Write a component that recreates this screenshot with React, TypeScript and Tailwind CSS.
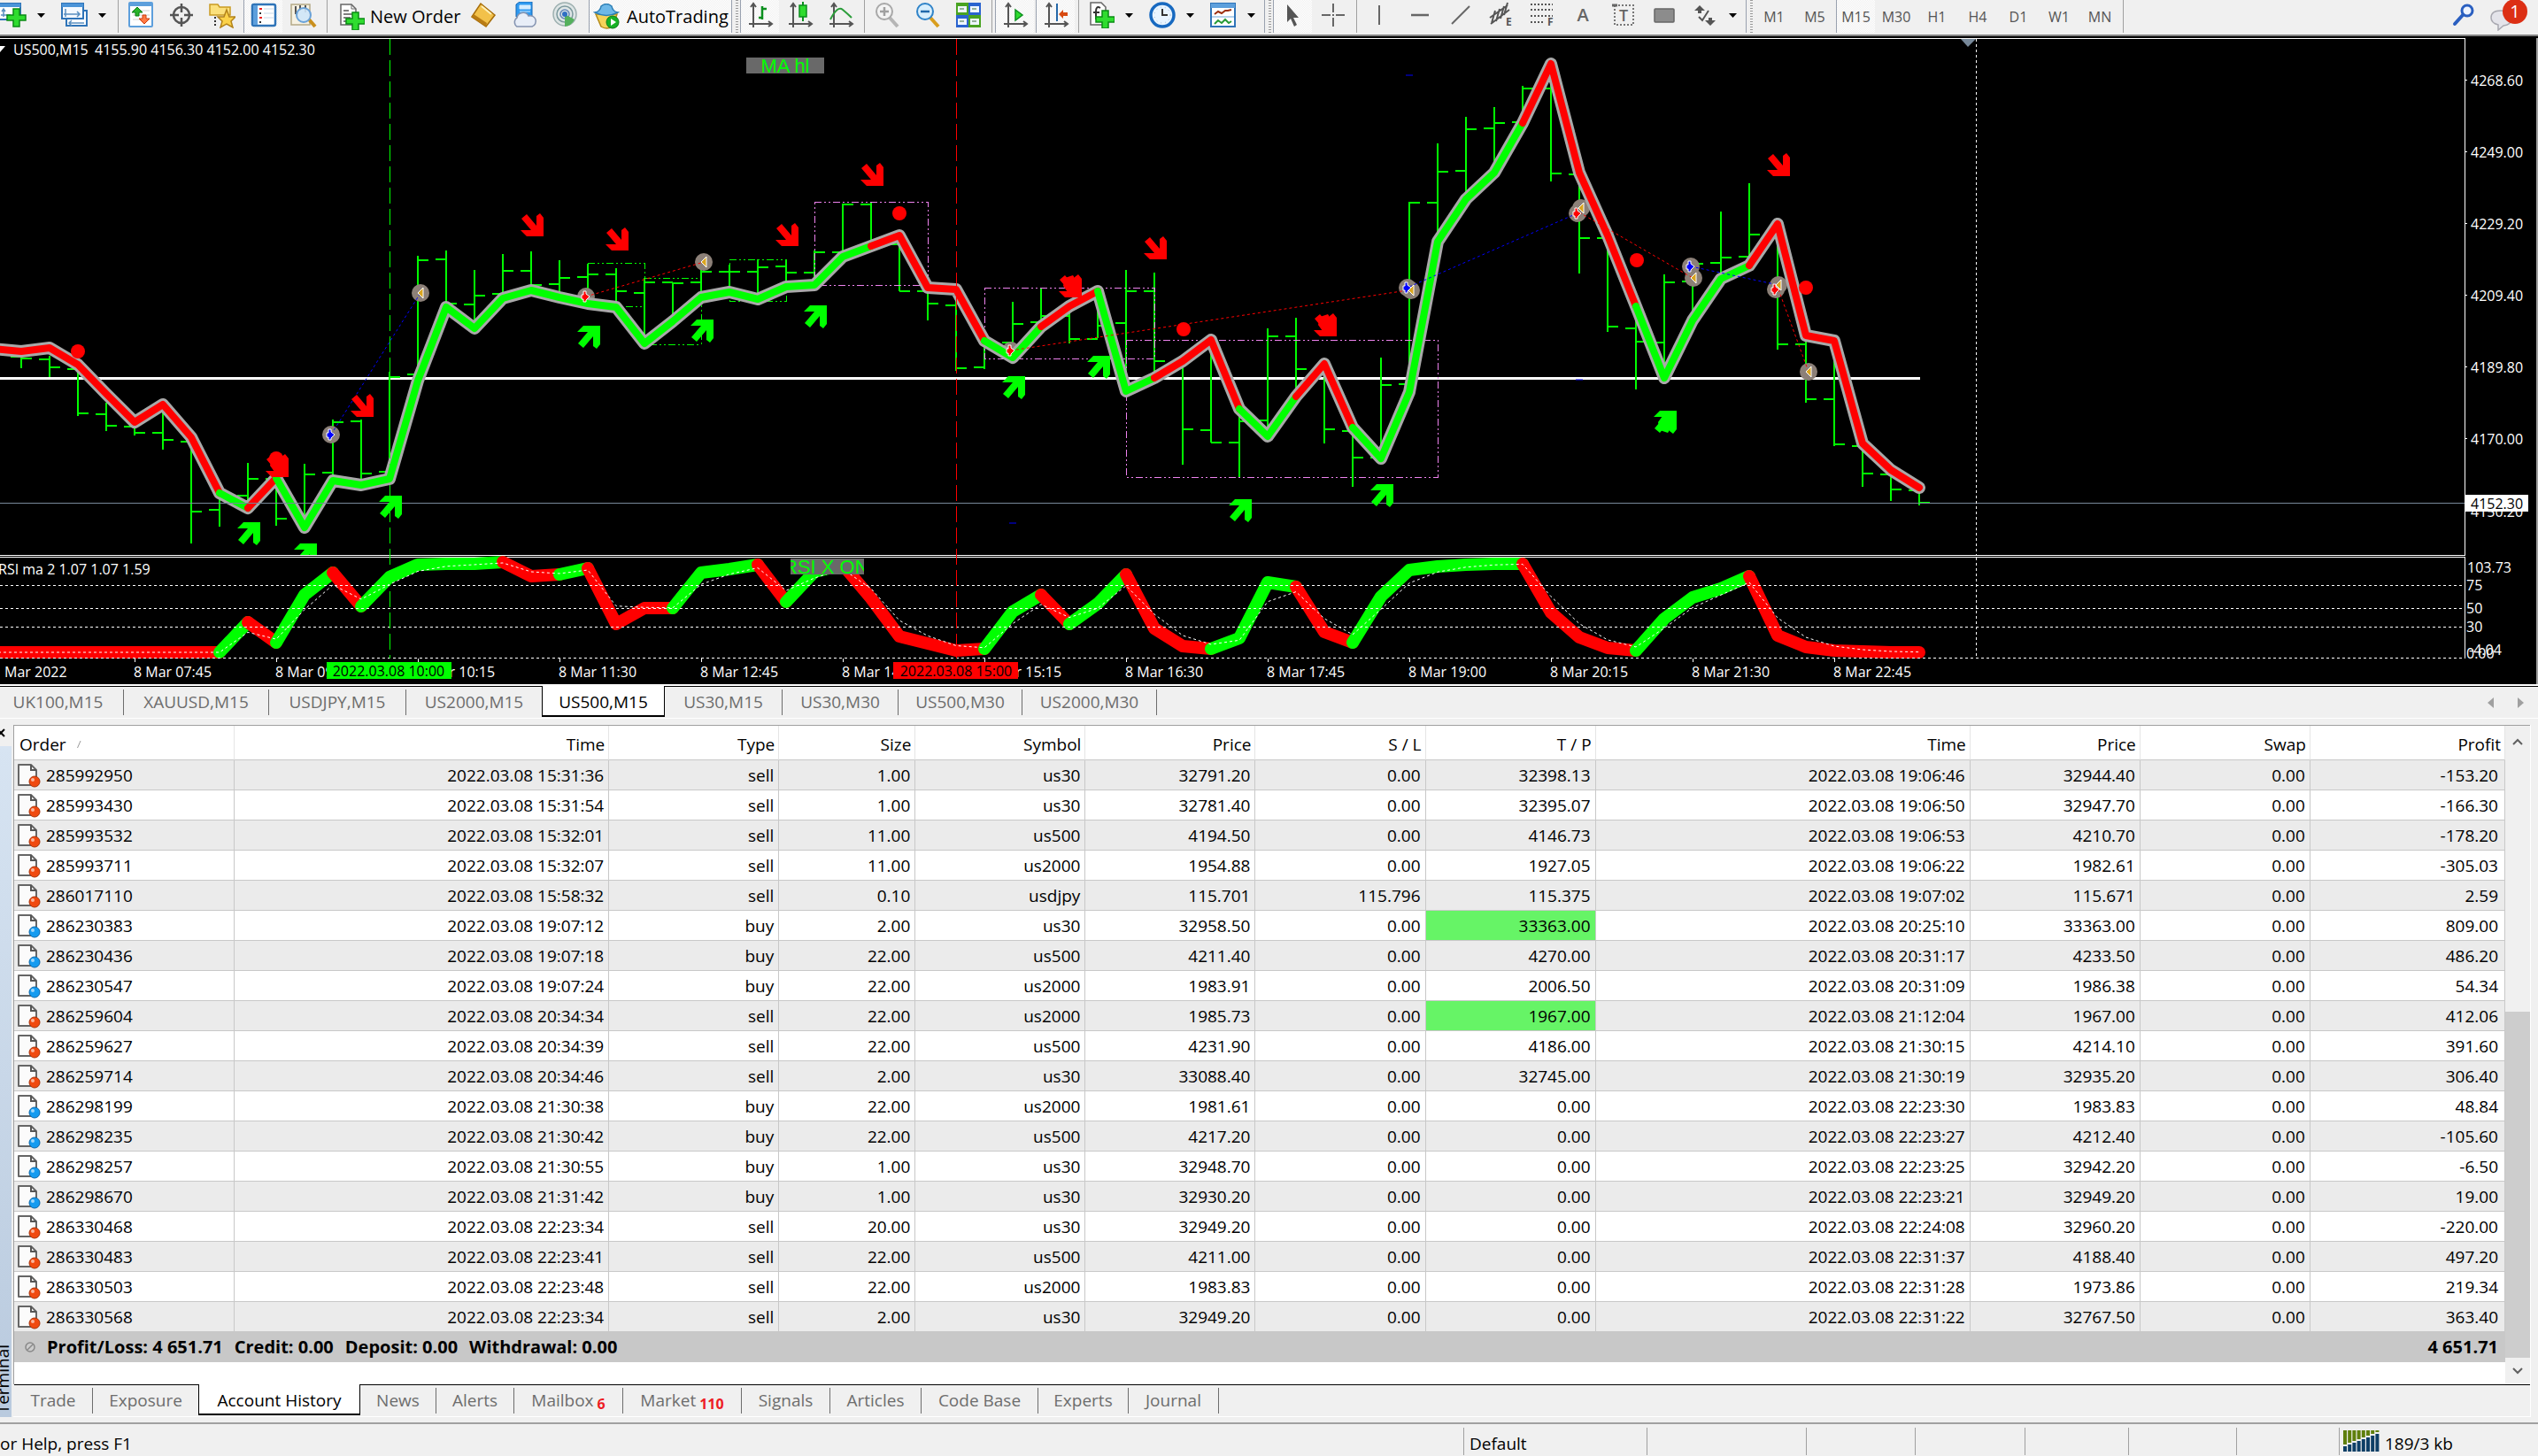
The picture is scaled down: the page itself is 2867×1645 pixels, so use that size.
import type { ReactNode } from "react";
import clsx from "clsx";

type Color = "r" | "g";
type Bar = [high: number, low: number, open: number, close: number];

const RED = "#ff0000";
const GREEN = "#00ff00";
const FONT = "'Open Sans', sans-serif";
const LABEL_FONT = "'Liberation Sans', sans-serif";

const BAR_START = 24;
const BAR_STEP = 32;
const barX = (i: number) => BAR_START + BAR_STEP * i;

const bars: Bar[] = [
    [400, 416, 403, 405], [402, 426, 406, 415], [400, 470, 417, 467], [455, 487, 468, 481],
    [480, 492, 482, 489], [462, 508, 489, 497], [500, 614, 499, 578], [556, 595, 576, 558],
    [523, 573, 560, 541], [540, 594, 541, 586], [524, 590, 586, 536], [474, 540, 534, 477],
    [474, 543, 476, 535], [420, 540, 533, 426], [289, 430, 423, 294], [283, 346, 293, 343],
    [305, 371, 344, 334], [287, 337, 332, 306], [284, 327, 306, 322], [294, 334, 321, 314],
    [298, 343, 313, 310], [303, 347, 310, 329], [314, 389, 331, 319], [319, 363, 319, 320],
    [288, 336, 319, 307], [299, 330, 307, 307], [293, 338, 307, 302], [293, 323, 301, 308],
    [283, 322, 308, 285], [230, 290, 285, 231], [228, 278, 231, 277], [266, 329, 276, 329],
    [325, 362, 329, 343], [327, 419, 345, 416], [385, 417, 415, 386], [341, 404, 387, 366],
    [326, 369, 364, 357], [346, 388, 357, 383], [329, 382, 383, 368], [305, 442, 365, 329],
    [308, 427, 329, 408], [408, 525, 408, 485], [384, 500, 486, 500], [462, 539, 500, 476],
    [371, 493, 475, 380], [359, 448, 380, 417], [411, 501, 417, 485], [483, 550, 487, 517],
    [404, 518, 517, 435], [228, 443, 434, 229], [162, 273, 229, 194], [132, 223, 193, 146],
    [121, 195, 145, 139], [97, 139, 138, 100], [75, 205, 100, 196], [195, 309, 197, 269],
    [266, 375, 269, 369], [346, 440, 371, 386], [310, 427, 387, 319], [292, 365, 318, 298],
    [239, 315, 297, 291], [207, 300, 290, 265], [253, 395, 265, 389], [379, 455, 389, 451],
    [385, 504, 451, 502], [501, 550, 504, 535], [531, 566, 536, 553], [551, 571, 554, 568],
];

const average = [
    397, 393, 412, 445, 477, 457, 494, 557, 574, 540, 596, 543, 548, 541, 430, 347, 371, 337, 328, 336,
    343, 347, 388, 363, 336, 330, 338, 324, 322, 290, 278, 266, 325, 327, 385, 404, 369, 346, 329, 442,
    427, 408, 384, 462, 493, 448, 411, 483, 518, 443, 273, 225, 195, 139, 72, 195, 266, 346, 427, 362,
    315, 300, 253, 379, 385, 501, 531, 551,
];

const rsi = [
    737, 737, 737, 737, 737, 737, 737, 737, 703, 726, 672, 647, 685, 652, 638, 637, 637, 635, 651, 649,
    642, 705, 687, 687, 647, 643, 638, 680, 646, 638, 676, 719, 727, 735, 733, 691, 672, 705, 682, 649,
    710, 730, 733, 721, 658, 663, 714, 726, 674, 644, 640, 638, 637, 637, 692, 720, 732, 735, 699, 675,
    665, 651, 718, 731, 735, 736, 737, 737,
];

// [x of the last point, colour]
const averageRuns: [number, Color][] = [
    [248, "r"], [280, "g"], [312, "r"], [984, "g"], [1112, "r"], [1176, "g"], [1240, "r"], [1304, "g"],
    [1400, "r"], [1464, "g"], [1528, "r"], [1720, "g"], [1848, "r"], [1976, "g"], [2168, "r"],
];
const rsiRuns: [number, Color][] = [
    [248, "r"], [280, "g"], [312, "r"], [376, "g"], [408, "r"], [568, "g"], [632, "r"], [664, "g"],
    [760, "r"], [856, "g"], [888, "r"], [952, "g"], [1112, "r"], [1176, "g"], [1208, "r"], [1272, "g"],
    [1368, "r"], [1464, "g"], [1528, "r"], [1720, "g"], [1848, "r"], [1976, "g"], [2168, "r"],
];

const toPoints = (values: number[], startY: number) =>
    [`-8,${startY}`, ...values.map((y, i) => `${barX(i)},${y}`)];

const splitRuns = (points: string[], runs: [number, Color][]) => {
    let from = 0;
    return runs.map(([x, color]) => {
        const to = (x - BAR_START) / BAR_STEP + 1;
        const part = points.slice(from, to + 1).join(" ");
        from = to;
        return { part, color };
    });
};

const averagePoints = toPoints(average, 394);
const rsiPoints = toPoints(rsi, 737);
const signal = rsi.reduce<number[]>((acc, v) => {
    const prev = acc.length ? acc[acc.length - 1] : v;
    return [...acc, prev + ((v - prev) * 2) / 3];
}, []);

const sellArrows = [
    [601, 254], [697, 270], [889, 265], [985, 197], [1305, 280], [1209, 323], [1497, 367], [2009, 186],
    [409, 458], [313, 526],
];
const buyArrows = [
    [665, 381], [793, 374], [921, 358], [1241, 415], [281, 603], [345, 627], [441, 573], [1145, 438],
    [1401, 577], [1561, 560], [1881, 477],
];
const doubledArrows = [1209, 1497, 1881, 313];
const dots = [[88, 397], [1016, 241], [1337, 372], [1849, 294], [2040, 325], [312, 518]];

const tradeLines: [number, number, number, number, string][] = [
    [374, 491, 475, 331, "#0000ff"],
    [662, 335, 795, 296, RED],
    [1142, 396, 1590, 328, RED],
    [1592, 324, 1784, 240, "#0000ff"],
    [1784, 240, 1912, 314, RED],
    [1910, 301, 2009, 322, "#0000ff"],
    [2009, 327, 2043, 420, RED],
];
const tradeMarks: [number, number, "buy" | "sell" | "close"][] = [
    [475, 331, "close"], [662, 335, "sell"], [795, 296, "close"], [374, 491, "buy"], [1142, 396, "sell"],
    [1590, 325, "buy"], [1594, 328, "close"], [1782, 241, "sell"], [1786, 235, "close"], [1910, 301, "buy"],
    [1913, 314, "close"], [2006, 327, "sell"], [2009, 322, "close"], [2043, 420, "close"],
];
const zones: [number, number, number, number, string][] = [
    [920, 228, 128, 94, "#ee82ee"],
    [1112, 325, 192, 80, "#ee82ee"],
    [1272, 384, 352, 155, "#ee82ee"],
    [664, 297, 64, 49, GREEN],
    [728, 314, 64, 75, GREEN],
    [824, 293, 64, 47, GREEN],
];

const timeLabels = [
    "8 Mar 07:45", "8 Mar 09:00", "8 Mar 10:15", "8 Mar 11:30", "8 Mar 12:45", "8 Mar 14:00", "8 Mar 15:15",
    "8 Mar 16:30", "8 Mar 17:45", "8 Mar 19:00", "8 Mar 20:15", "8 Mar 21:30", "8 Mar 22:45",
];
const priceLabels: [string, number][] = [
    ["4268.60", 90], ["4249.00", 171], ["4229.20", 252], ["4209.40", 333], ["4189.80", 414],
    ["4170.00", 495], ["4150.20", 577],
];

function MarkBase({ x, y }: { x: number; y: number }) {
    return <circle cx={x} cy={y} r="10" fill="#8c8078" />;
}

function MarkSign({ x, y, kind }: { x: number; y: number; kind: "buy" | "sell" | "close" }) {
    return kind === "close" ? (
        <path transform={`translate(${x} ${y})`} d="M3 -6 V6 L-3 0Z" fill="#daa520" stroke="#fff" />
    ) : (
        <path
            transform={`translate(${x} ${y})`}
            d="M-3 -6 H0 V-3 L4 0 L0 4 V6 H-3 V3 H-5 V-2 H-3Z"
            fill={kind === "buy" ? "#0000ff" : RED}
            stroke="#fff"
        />
    );
}

function PricePlot() {
    return (
        <svg
            viewBox="0 43 2784 730"
            preserveAspectRatio="xMinYMin slice"
            className="block h-[730px] w-full min-w-0 bg-black"
            fontFamily={FONT}
            fontSize="16"
        >
            <rect x="0" y="43" width="2784" height="1" fill="#fff" />
            <rect x="0" y="426" width="2169" height="3" fill="#fff" />
            <g fill="none" stroke={GREEN} strokeWidth="2" shapeRendering="crispEdges">
                {bars.map(([high, low, open, close], i) => (
                    <path
                        key={i}
                        d={`M${barX(i)} ${high}V${low}M${barX(i) - 12} ${open}h12M${barX(i)} ${close}h12`}
                    />
                ))}
            </g>
            <g fill="none" strokeDasharray="8 3 2 3 2 3" shapeRendering="crispEdges">
                {zones.map(([x, y, w, h, c]) => (
                    <rect key={`${x}-${y}`} x={x} y={y} width={w} height={h} stroke={c} />
                ))}
            </g>
            {tradeMarks.map(([x, y]) => (
                <MarkBase key={`${x}-${y}`} x={x} y={y} />
            ))}
            <g fill="none" strokeLinejoin="round" strokeLinecap="round">
                <polyline points={averagePoints.join(" ")} stroke="#a9a9a9" strokeWidth="14" />
                {splitRuns(averagePoints, averageRuns).map(({ part, color }) => (
                    <polyline key={part} points={part} stroke={color === "r" ? RED : GREEN} strokeWidth="8" />
                ))}
            </g>
            <line x1="0" x2="2784" y1="568.5" y2="568.5" stroke="#778899" />
            <g strokeDasharray="3 3">
                {tradeLines.map(([x1, y1, x2, y2, c]) => (
                    <line key={`${x1}-${y1}`} x1={x1} y1={y1} x2={x2} y2={y2} stroke={c} />
                ))}
            </g>
            {tradeMarks.map(([x, y, kind]) => (
                <MarkSign key={`${x}-${y}`} x={x} y={y} kind={kind} />
            ))}
            {dots.map(([x, y]) => (
                <circle key={`${x}-${y}`} cx={x} cy={y} r="8" fill={RED} />
            ))}
            {sellArrows.map(([x, y]) => (
                <g key={`${x}-${y}`} transform={`translate(${x - 13} ${y - 13})`} fill={RED}>
                    <path d="M1 6 L7 1 L18 14 V3 L22 0 L26 5 V26 H7 L0 19 H12Z" />
                    {doubledArrows.includes(x) && <path d="M7 4 L16 1 L22 10 V20 H10 L5 13Z" />}
                </g>
            ))}
            {buyArrows.map(([x, y]) => (
                <g key={`${x}-${y}`} transform={`translate(${x - 13} ${y + 13}) scale(1 -1)`} fill={GREEN}>
                    <path d="M1 6 L7 1 L18 14 V3 L22 0 L26 5 V26 H7 L0 19 H12Z" />
                    {doubledArrows.includes(x) && <path d="M7 4 L16 1 L22 10 V20 H10 L5 13Z" />}
                </g>
            ))}
            <path d="M1588 85h8M1140 591h8M1780 429h8" stroke="#0000ff" strokeWidth="1" />

            {/* indicator window */}
            <rect x="0" y="627" width="2784" height="118" fill="#000" />
            <rect x="0" y="627" width="2784" height="1" fill="#fff" />
            <rect x="0" y="629" width="2784" height="1" fill="#fff" />
            <g fill="none" strokeLinejoin="round" strokeLinecap="round">
                {splitRuns(rsiPoints, rsiRuns).map(({ part, color }) => (
                    <polyline key={part} points={part} stroke={color === "r" ? RED : GREEN} strokeWidth="14" />
                ))}
            </g>
            <polyline points={toPoints(signal, 737).join(" ")} fill="none" stroke="#fff" strokeDasharray="3 3" />
            <g stroke="#fff" strokeDasharray="3 3" shapeRendering="crispEdges">
                <line x1="0" x2="2784" y1="661" y2="661" />
                <line x1="0" x2="2784" y1="687" y2="687" />
                <line x1="0" x2="2784" y1="708" y2="708" />
                <line x1="0" x2="2784" y1="743" y2="743" />
                <line x1="2232" x2="2232" y1="44" y2="627" />
                <line x1="2232" x2="2232" y1="630" y2="744" />
            </g>
            <g strokeDasharray="18 6" shapeRendering="crispEdges">
                <line x1="440" x2="440" y1="44" y2="744" stroke={GREEN} />
                <line x1="1080" x2="1080" y1="44" y2="744" stroke={RED} />
            </g>
            <path d="M2215 44H2232L2223 53Z" fill="#778899" />

            <path d="M-6 52H6L0 59Z" fill="#fff" />
            <text x="15" y="62" fill="#fff">US500,M15</text>
            <text x="107" y="62" fill="#fff">4155.90 4156.30 4152.00 4152.30</text>
            <text x="-2" y="649" fill="#fff">RSI ma 2 1.07 1.07 1.59</text>
            <rect x="843" y="65" width="88" height="18" fill="#696969" />
            <text x="887" y="82" fill={GREEN} fontSize="22" fontFamily={LABEL_FONT} textAnchor="middle">MA hl</text>
            <svg x="893" y="631" width="83" height="18">
                <rect width="83" height="18" fill="#696969" />
                <text x="-8" y="17" fill={GREEN} fontSize="22" fontFamily={LABEL_FONT}>RSI X ON</text>
            </svg>

            {/* time axis */}
            <g fill="#fff">
                <text x="5" y="765">Mar 2022</text>
                {timeLabels.map((label, i) => (
                    <g key={label}>
                        <rect x={152 + 160 * i} y="744" width="1" height="4" />
                        <text x={151 + 160 * i} y="765">{label}</text>
                    </g>
                ))}
            </g>
            <rect x="369" y="748" width="141" height="19" fill={GREEN} />
            <text x="439" y="764" textAnchor="middle">2022.03.08 10:00</text>
            <rect x="1009" y="748" width="141" height="19" fill={RED} />
            <text x="1080" y="764" textAnchor="middle">2022.03.08 15:00</text>
        </svg>
    );
}

function PriceAxis() {
    return (
        <svg viewBox="2784 43 83 730" className="block h-[730px] w-[83px] bg-black" fontFamily={FONT} fontSize="16">
            <rect x="2784" y="43" width="1" height="585" fill="#fff" />
            <rect x="2784" y="629" width="1" height="115" fill="#fff" />
            <g fill="#fff">
                {priceLabels.map(([label, y]) => (
                    <g key={label}>
                        <rect x="2785" y={y} width="2" height="1" />
                        <text x="2791" y={y + 7}>{label}</text>
                    </g>
                ))}
            </g>
            <rect x="2785" y="559" width="71" height="19" fill="#fff" />
            <text x="2791" y="575">4152.30</text>
            <g fill="#fff">
                <text x="2787" y="647">103.73</text>
                <text x="2786" y="667">75</text>
                <text x="2786" y="693">50</text>
                <text x="2786" y="714">30</text>
                <text x="2789" y="740">-4.04</text>
                <text x="2786" y="744">0.00</text>
            </g>
            <rect x="2865" y="43" width="2" height="730" fill="#a0a0a0" />
        </svg>
    );
}

/* ---------- toolbar ---------- */

function Icon({ children }: { children: ReactNode }) {
    return (
        <svg viewBox="0 0 30 30" width="30" height="30" fill="none" className="shrink-0">
            {children}
        </svg>
    );
}

const plus = (
    <path d="M16 10h7v7h7v6h-7v7h-7v-7H9v-6h7z" fill="#2fdc2f" stroke="#0a8a14" strokeWidth="1.5" />
);

const axes = (
    <path d="M7 3V29M2 25H27M4 6L7 2L10 6M24 22L28 25L24 28" stroke="#555" strokeWidth="2" />
);

const icons = {
    newChart: (
        <>
            <rect x="-4" y="2" width="27" height="18" fill="#fff" stroke="#2f74b8" strokeWidth="2" />
            <rect x="-4" y="2" width="27" height="4" fill="#4b94d8" />
            <path d="M4 9V17M1 15H12M2 11L4 8L6 11" stroke="#5a8fc0" strokeWidth="1.5" />
            <g transform="translate(-1 -2)">{plus}</g>
        </>
    ),
    profiles: (
        <>
            <rect x="6" y="10" width="23" height="17" fill="#fff" stroke="#2f74b8" strokeWidth="2" />
            <path d="M9 24H26M12 21L9 24L12 27" stroke="#5a8fc0" strokeWidth="1.5" />
            <rect x="1" y="2" width="24" height="17" fill="#f4f9ff" stroke="#2f74b8" strokeWidth="2" />
            <rect x="1" y="2" width="24" height="4" fill="#4b94d8" />
            <path d="M5 8V17M3 14H21M18 11L21 14L18 17" stroke="#5a8fc0" strokeWidth="1.5" />
        </>
    ),
    marketWatch: (
        <>
            <rect x="2" y="1" width="26" height="27" rx="1" fill="#fff" stroke="#5d9fdc" strokeWidth="2" />
            <rect x="2" y="1" width="26" height="4" fill="#5d9fdc" />
            <path d="M6 10H25M6 15H25M6 20H25" stroke="#d0d0d0" />
            <path d="M11 6L17 12H13V16H9V12H5Z" fill="#29b329" stroke="#0c7d17" />
            <path d="M19 25L13 19H17V15H21V19H25Z" fill="#ff7a45" stroke="#cf3a0a" />
        </>
    ),
    crosshairTarget: (
        <g stroke="#555" strokeWidth="2.5">
            <circle cx="15" cy="15" r="9" />
            <path d="M15 2V12M15 18V28M2 15H12M18 15H28" />
        </g>
    ),
    navigator: (
        <>
            <path d="M1 3H10L12 6H24V15H1Z" fill="#fbe07c" stroke="#c99b22" strokeWidth="1.5" />
            <path d="M7 17V29" stroke="#333" strokeWidth="2" strokeDasharray="2 2" />
            <path d="M20 9L23 17L30 17L25 22L27 29L20 25L13 29L15 22L10 17H17Z" fill="#fbd24a" stroke="#b3831a" strokeWidth="1.5" />
        </>
    ),
    terminal: (
        <>
            <rect x="2" y="3" width="26" height="24" rx="2" fill="#fff" stroke="#2f74b8" strokeWidth="2.5" />
            <rect x="3" y="4" width="5" height="22" fill="#5d9fdc" />
            <path d="M11 7V25" stroke="#333" strokeWidth="2" strokeDasharray="2 3" />
            <path d="M10 8H13M10 18H13" stroke="#e22" strokeWidth="2" />
            <path d="M15 8H26M15 13H26M15 18H26" stroke="#c8d8e8" />
        </>
    ),
    tester: (
        <>
            <rect x="1" y="3" width="21" height="23" fill="#f6f1e2" stroke="#b4a987" strokeWidth="1.5" />
            <path d="M6 5V14M11 4V10M17 4V12" stroke="#555" strokeWidth="2" />
            <path d="M21 20L28 28" stroke="#c98f1c" strokeWidth="4" />
            <circle cx="15" cy="15" r="8" fill="#cfe5fa" fillOpacity="0.9" stroke="#6aa2d8" strokeWidth="2" />
        </>
    ),
    newOrder: (
        <>
            <path d="M3 1H15L20 6V24H3Z" fill="#fff" stroke="#666" strokeWidth="1.5" />
            <path d="M15 1V6H20" stroke="#666" />
            <path d="M6 8H12M6 12H17M6 16H14M6 20H11" stroke="#555" strokeWidth="1.5" />
            {plus}
        </>
    ),
    metaEditor: (
        <>
            <path d="M2 17L12 2L28 15L18 28Z" fill="#f2c14a" stroke="#a66d0b" strokeWidth="1.5" />
            <path d="M2 17L18 28L19 24L4 14Z" fill="#b97c14" />
            <path d="M13 5L24 14" stroke="#fff0b8" strokeWidth="2" />
        </>
    ),
    cloud: (
        <>
            <path d="M6 3L10 0H24V17H6Z" fill="#2f9af0" stroke="#1567b5" />
            <path d="M10 4H22V8H10ZM10 11H22" fill="#d5ecff" stroke="#d5ecff" />
            <path d="M7 28a6 6 0 0 1 0-10a7 7 0 0 1 13-2a6 6 0 0 1 4 12z" fill="#e8eef8" stroke="#8493b0" strokeWidth="1.5" />
        </>
    ),
    signals: (
        <>
            <circle cx="15" cy="14" r="13" fill="#dfe6e6" stroke="#9db0b0" strokeWidth="1.5" />
            <circle cx="15" cy="14" r="9" stroke="#7d9a9e" strokeWidth="1.5" />
            <circle cx="15" cy="14" r="5" stroke="#6285b8" strokeWidth="1.5" />
            <path d="M15 14V28A14 14 0 0 0 26 20Z" fill="#54b05c" />
            <circle cx="15" cy="14" r="3" fill="#2f6fc4" />
        </>
    ),
    autoTrading: (
        <>
            <path d="M3 12L27 12L22 26Q15 30 9 26Z" fill="#f6d35a" stroke="#b48a18" strokeWidth="1.5" />
            <path d="M2 10Q8 9 9 3Q15 -2 21 3Q22 9 28 10Q15 17 2 10Z" fill="#6db8e8" stroke="#2d7fb5" strokeWidth="1.5" />
            <circle cx="22" cy="21" r="7" fill="#17b125" stroke="#0b7a18" />
            <path d="M20 17V25L26 21Z" fill="#fff" />
        </>
    ),
    barChart: (
        <>
            {axes}
            <path d="M17 5V20M13 18H17M17 8H22" stroke="#0b8f1e" strokeWidth="2.5" />
        </>
    ),
    candles: (
        <>
            {axes}
            <path d="M18 0V22" stroke="#0b8f1e" strokeWidth="2" />
            <rect x="14" y="4" width="8" height="13" fill="#2fdc2f" stroke="#0b8f1e" strokeWidth="1.5" />
        </>
    ),
    lineChart: (
        <>
            {axes}
            <path d="M3 20Q11 4 17 9T27 18" stroke="#2b9d3a" strokeWidth="2" />
        </>
    ),
    zoomIn: (
        <>
            <path d="M18 18L27 28" stroke="#b5b5b5" strokeWidth="4" />
            <circle cx="12" cy="11" r="9" fill="#f4f4f4" stroke="#a8a8a8" strokeWidth="2" />
            <path d="M7 11H17M12 6V16" stroke="#a0a0a0" strokeWidth="2.5" />
        </>
    ),
    zoomOut: (
        <>
            <path d="M18 18L27 28" stroke="#d99e1e" strokeWidth="4" />
            <circle cx="12" cy="11" r="9" fill="#d8eefc" stroke="#2f83c8" strokeWidth="2" />
            <path d="M7 11H17" stroke="#2168ab" strokeWidth="2.5" />
        </>
    ),
    tile: (
        <>
            <rect x="1" y="1" width="14" height="14" fill="#49a321" />
            <rect x="15" y="1" width="14" height="14" fill="#2a63cf" />
            <rect x="1" y="15" width="14" height="14" fill="#2a63cf" />
            <rect x="15" y="15" width="14" height="14" fill="#49a321" />
            <path d="M3 5h10v7H3zM17 5h10v7H17zM3 19h10v7H3zM17 19h10v7H17z" fill="#eef6ff" />
            <path d="M5 8h5M19 8h5M5 22h5M19 22h5" stroke="#7a9a7a" strokeWidth="1.5" />
        </>
    ),
    autoScroll: (
        <>
            {axes}
            <path d="M15 9L23 15L15 21Z" fill="#2fdc2f" stroke="#0b8f1e" strokeWidth="1.5" />
        </>
    ),
    chartShift: (
        <>
            {axes}
            <path d="M16 2V22" stroke="#2668a8" strokeWidth="2" />
            <path d="M18 14L23 9V12H28V16H23V19Z" fill="#d84a10" />
        </>
    ),
    indicators: (
        <>
            <path d="M3 1H15L20 6V26H3Z" fill="#fff" stroke="#666" strokeWidth="1.5" />
            <path d="M14 7Q9 4 9 11V20M6 12H13" stroke="#333" strokeWidth="2" />
            {plus}
        </>
    ),
    clock: (
        <>
            <circle cx="15" cy="15" r="13" fill="#e8f4ff" stroke="#1769c0" strokeWidth="3.5" />
            <circle cx="15" cy="15" r="9" stroke="#9fb8d0" strokeDasharray="1 4" />
            <path d="M15 8V15H21" stroke="#333" strokeWidth="2" />
        </>
    ),
    templates: (
        <>
            <rect x="1" y="2" width="27" height="26" fill="#fff" stroke="#2f74b8" strokeWidth="2" />
            <rect x="1" y="2" width="27" height="5" fill="#5d9fdc" />
            <path d="M2 17H27" stroke="#9cc3e6" strokeWidth="1.5" />
            <path d="M5 14L9 11L13 13L17 10H20L24 9" stroke="#9c3010" strokeWidth="2" />
            <path d="M5 25L9 21L13 24L17 20L21 24L24 22" stroke="#279a35" strokeWidth="2" />
        </>
    ),
    cursor: <path d="M8 3V23L12 19L16 28L19 26L15 18H21Z" fill="#555" />,
    cross: <path d="M15 2V12M15 18V28M2 15H12M18 15H28M14 15H16" stroke="#666" strokeWidth="2" />,
    vline: <path d="M15 4V26" stroke="#666" strokeWidth="2" />,
    hline: <path d="M5 15H25" stroke="#666" strokeWidth="2.5" />,
    trend: <path d="M5 25L25 5" stroke="#666" strokeWidth="2" />,
    channel: (
        <>
            <path d="M2 18L22 4M3 25L24 9M8 10L4 24M13 8L9 22M18 5L14 19M22 1L18 15" stroke="#555" strokeWidth="2" />
            <text x="20" y="27" fontFamily={FONT} fontSize="12" fontWeight="700" fill="#555">E</text>
        </>
    ),
    fibo: (
        <>
            <path d="M2 3H27M2 9H27M2 16H27M2 23H18" stroke="#555" strokeWidth="2" strokeDasharray="2 2" />
            <text x="21" y="27" fontFamily={FONT} fontSize="12" fontWeight="700" fill="#555">F</text>
        </>
    ),
    text: (
        <text x="15" y="22" fontFamily={FONT} fontSize="20" fontWeight="600" fill="#666" textAnchor="middle">A</text>
    ),
    textLabel: (
        <>
            <rect x="5" y="4" width="21" height="22" stroke="#777" strokeWidth="2" strokeDasharray="2 2" />
            <path d="M2 4H8" stroke="#666" strokeWidth="3" />
            <text x="15" y="22" fontFamily={FONT} fontSize="18" fontWeight="600" fill="#666" textAnchor="middle">T</text>
        </>
    ),
    shape: <rect x="4" y="8" width="22" height="15" rx="1" fill="#8c8c8c" stroke="#666" strokeWidth="1.5" />,
    arrows: (
        <g fill="#555">
            <path d="M9 4L15 10H11V13H7V10H3Z" />
            <path d="M21 27L15 21H19V18H23V21H27Z" />
            <path d="M8 17L12 21L19 10" stroke="#555" strokeWidth="2" fill="none" />
        </g>
    ),
};

type IconName = keyof typeof icons;

const pressedStyle =
    "border-l border-gray-400 bg-[repeating-conic-gradient(#fff_0_25%,#f0f0f0_0_50%)] bg-[length:2px_2px]";

function Tool({ icon, label, pressed }: { icon: IconName; label: string; pressed?: boolean }) {
    return (
        <button
            type="button"
            aria-label={label}
            className={clsx("mx-px flex h-[37px] w-11 shrink-0 items-start justify-center pt-[2px]", pressed && pressedStyle)}
        >
            <Icon>{icons[icon]}</Icon>
        </button>
    );
}

function DropTool({ icon, label }: { icon: IconName; label: string }) {
    return (
        <div className="flex w-[69px] shrink-0">
            <Tool icon={icon} label={label} />
            <button type="button" aria-label={`${label} menu`} className="flex h-[35px] w-4 items-center justify-center">
                <svg viewBox="0 0 9 5" width="9" height="5">
                    <path d="M0 0H9L4.500 5Z" fill="#000" />
                </svg>
            </button>
        </div>
    );
}

function Separator() {
    return (
        <span className="h-[37px] w-[6px] shrink-0 bg-[linear-gradient(#a0a0a0,#a0a0a0)] bg-[length:1px_100%] bg-center bg-no-repeat" />
    );
}

function Grip() {
    return (
        <span className="flex h-[37px] w-[9px] shrink-0 border-l border-gray-400">
            <span className="ml-1 w-[3px] bg-[repeating-linear-gradient(#999_0_1px,#f0f0f0_1px_3px)]" />
        </span>
    );
}

const periods = ["M1", "M5", "M15", "M30", "H1", "H4", "D1", "W1", "MN"];

function Toolbar() {
    return (
        <div className="flex h-[39px] items-start overflow-hidden">
            <div className="-ml-2 flex">
                <DropTool icon="newChart" label="New chart" />
                <DropTool icon="profiles" label="Profiles" />
            </div>
            <Separator />
            <Tool icon="marketWatch" label="Market Watch" />
            <Tool icon="crosshairTarget" label="Data Window" />
            <Tool icon="navigator" label="Navigator" />
            <Tool icon="terminal" label="Terminal" pressed />
            <Tool icon="tester" label="Strategy Tester" />
            <Separator />
            <button
                type="button"
                className="flex h-[37px] w-[151px] shrink-0 items-center gap-[6px] pl-[10px] text-[20px] leading-[26px] whitespace-nowrap"
            >
                <Icon>{icons.newOrder}</Icon>
                New Order
            </button>
            <Tool icon="metaEditor" label="MetaEditor" />
            <Tool icon="cloud" label="Cloud" />
            <Tool icon="signals" label="Signals" />
            <button
                type="button"
                className={clsx(
                    "ml-1 flex h-[37px] w-[161px] shrink-0 items-center gap-2 pl-1 text-[20px] leading-[26px] whitespace-nowrap",
                    pressedStyle
                )}
            >
                <Icon>{icons.autoTrading}</Icon>
                AutoTrading
            </button>
            <Grip />
            <Tool icon="barChart" label="Bar chart" pressed />
            <Tool icon="candles" label="Candlesticks" />
            <Tool icon="lineChart" label="Line chart" />
            <Separator />
            <Tool icon="zoomIn" label="Zoom in" />
            <Tool icon="zoomOut" label="Zoom out" />
            <Tool icon="tile" label="Tile windows" />
            <Separator />
            <Tool icon="autoScroll" label="Auto scroll" pressed />
            <Tool icon="chartShift" label="Chart shift" pressed />
            <Separator />
            <DropTool icon="indicators" label="Indicators" />
            <DropTool icon="clock" label="Periods" />
            <DropTool icon="templates" label="Templates" />
            <Grip />
            <Tool icon="cursor" label="Cursor" pressed />
            <Tool icon="cross" label="Crosshair" />
            <Separator />
            <Tool icon="vline" label="Vertical line" />
            <Tool icon="hline" label="Horizontal line" />
            <Tool icon="trend" label="Trendline" />
            <Tool icon="channel" label="Equidistant channel" />
            <Tool icon="fibo" label="Fibonacci" />
            <Tool icon="text" label="Text" />
            <Tool icon="textLabel" label="Text label" />
            <Tool icon="shape" label="Shapes" />
            <DropTool icon="arrows" label="Arrows" />
            <Grip />
            {periods.map((period) => (
                <button
                    key={period}
                    type="button"
                    className={clsx(
                        "mx-px h-[37px] w-11 shrink-0 text-center text-[16px] leading-[34px] text-[#555]",
                        period === "M15" && pressedStyle
                    )}
                >
                    {period}
                </button>
            ))}
            <Separator />
            <div className="ml-auto flex shrink-0 gap-4 pr-[11px]">
                <button type="button" aria-label="Search" className="flex items-start pt-1">
                    <svg viewBox="0 0 26 26" width="26" height="26" fill="none">
                        <path d="M12 13L3 23" stroke="#2a5fc0" strokeWidth="4" strokeLinecap="round" />
                        <circle cx="17" cy="8" r="6" fill="#eef4ff" stroke="#2a5fc0" strokeWidth="3" />
                    </svg>
                </button>
                <button type="button" aria-label="Messages" className="relative h-[35px] w-[44px]">
                    <svg viewBox="0 0 44 35" width="44" height="35">
                        <path d="M13 12q12 0 12 9q0 7-9 8l-6 5v-6q-8-2-8-8q0-8 11-8z" fill="#e4e4ea" stroke="#a8a8b0" strokeWidth="1.5" />
                        <circle cx="29" cy="13" r="14" fill="#dc2f14" />
                    </svg>
                    <span className="absolute top-0 left-[15px] w-7 text-center text-[20px] leading-[26px] text-white">1</span>
                </button>
            </div>
        </div>
    );
}

/* ---------- tabs ---------- */

interface Tab {
    label: string;
    width: string;
    count?: number;
}

const chartTabs: Tab[] = [
    { label: "UK100,M15", width: "-ml-2 w-[148px]" },
    { label: "XAUUSD,M15", width: "w-[164px]" },
    { label: "USDJPY,M15", width: "w-[155px]" },
    { label: "US2000,M15", width: "w-[153px]" },
    { label: "US500,M15", width: "w-[139px]" },
    { label: "US30,M15", width: "w-[133px]" },
    { label: "US30,M30", width: "w-[131px]" },
    { label: "US500,M30", width: "w-[140px]" },
    { label: "US2000,M30", width: "w-[152px]" },
];

const terminalTabs: Tab[] = [
    { label: "Trade", width: "w-[89px]" },
    { label: "Exposure", width: "w-[119px]" },
    { label: "Account History", width: "w-[183px]" },
    { label: "News", width: "w-[86px]" },
    { label: "Alerts", width: "w-[88px]" },
    { label: "Mailbox", width: "w-[123px]", count: 6 },
    { label: "Market", width: "w-[134px]", count: 110 },
    { label: "Signals", width: "w-[100px]" },
    { label: "Articles", width: "w-[103px]" },
    { label: "Code Base", width: "w-[132px]" },
    { label: "Experts", width: "w-[102px]" },
    { label: "Journal", width: "w-[102px]" },
];

function TabStrip({ tabs, active }: { tabs: Tab[]; active: string }) {
    const activeIndex = tabs.findIndex((t) => t.label === active);
    return (
        <div role="tablist" className="flex h-9 min-w-0 flex-1 items-start">
            {tabs.map((tab, i) => (
                <button
                    key={tab.label}
                    type="button"
                    role="tab"
                    aria-selected={i === activeIndex}
                    className={clsx(
                        "flex h-[35px] shrink-0 items-center justify-center text-[19px] leading-none whitespace-nowrap",
                        tab.width,
                        i === activeIndex
                            ? "border-x border-b-2 border-black bg-white pt-[3px] text-black"
                            : "border-t border-black text-[#6d6d6d]"
                    )}
                >
                    <span
                        className={clsx(
                            "flex h-[29px] flex-1 items-center justify-center gap-1",
                            i !== activeIndex && i !== activeIndex - 1 && "border-r border-[#6d6d6d]"
                        )}
                    >
                        {tab.label}
                        {tab.count && <b className="pt-2 text-[16px] text-[#ed1c24]">{tab.count}</b>}
                    </span>
                </button>
            ))}
            <span className="flex-1 border-t border-black" />
        </div>
    );
}

/* ---------- history table ---------- */

interface Order {
    id: string;
    opened: string;
    type: "buy" | "sell";
    size: string;
    symbol: string;
    price: string;
    sl: string;
    tp: string;
    closed: string;
    closePrice: string;
    profit: string;
    hitTp?: boolean;
}

const order = (row: string): Order => {
    const [id, opened, type, size, symbol, price, sl, tp, closed, closePrice, profit, hit] = row.split(" ");
    return { id, opened, type: type as Order["type"], size, symbol, price, sl, tp, closed, closePrice, profit, hitTp: hit === "tp" };
};

const orders = [
    "285992950 15:31:36 sell 1.00 us30 32791.20 0.00 32398.13 19:06:46 32944.40 -153.20",
    "285993430 15:31:54 sell 1.00 us30 32781.40 0.00 32395.07 19:06:50 32947.70 -166.30",
    "285993532 15:32:01 sell 11.00 us500 4194.50 0.00 4146.73 19:06:53 4210.70 -178.20",
    "285993711 15:32:07 sell 11.00 us2000 1954.88 0.00 1927.05 19:06:22 1982.61 -305.03",
    "286017110 15:58:32 sell 0.10 usdjpy 115.701 115.796 115.375 19:07:02 115.671 2.59",
    "286230383 19:07:12 buy 2.00 us30 32958.50 0.00 33363.00 20:25:10 33363.00 809.00 tp",
    "286230436 19:07:18 buy 22.00 us500 4211.40 0.00 4270.00 20:31:17 4233.50 486.20",
    "286230547 19:07:24 buy 22.00 us2000 1983.91 0.00 2006.50 20:31:09 1986.38 54.34",
    "286259604 20:34:34 sell 22.00 us2000 1985.73 0.00 1967.00 21:12:04 1967.00 412.06 tp",
    "286259627 20:34:39 sell 22.00 us500 4231.90 0.00 4186.00 21:30:15 4214.10 391.60",
    "286259714 20:34:46 sell 2.00 us30 33088.40 0.00 32745.00 21:30:19 32935.20 306.40",
    "286298199 21:30:38 buy 22.00 us2000 1981.61 0.00 0.00 22:23:30 1983.83 48.84",
    "286298235 21:30:42 buy 22.00 us500 4217.20 0.00 0.00 22:23:27 4212.40 -105.60",
    "286298257 21:30:55 buy 1.00 us30 32948.70 0.00 0.00 22:23:25 32942.20 -6.50",
    "286298670 21:31:42 buy 1.00 us30 32930.20 0.00 0.00 22:23:21 32949.20 19.00",
    "286330468 22:23:34 sell 20.00 us30 32949.20 0.00 0.00 22:24:08 32960.20 -220.00",
    "286330483 22:23:41 sell 22.00 us500 4211.00 0.00 0.00 22:31:37 4188.40 497.20",
    "286330503 22:23:48 sell 22.00 us2000 1983.83 0.00 0.00 22:31:28 1973.86 219.34",
    "286330568 22:23:34 sell 2.00 us30 32949.20 0.00 0.00 22:31:22 32767.50 363.40",
].map(order);

const columns: [string, string][] = [
    ["Time", "w-[423px]"], ["Type", "w-[192px]"], ["Size", "w-[154px]"], ["Symbol", "w-[192px]"],
    ["Price", "w-[192px]"], ["S / L", "w-[192px]"], ["T / P", "w-[192px]"], ["Time", "w-[423px]"],
    ["Price", "w-[192px]"], ["Swap", "w-[192px]"], ["Profit", "w-[220px]"],
];

function OrderIcon({ type }: { type: Order["type"] }) {
    return (
        <svg viewBox="0 0 26 28" width="26" height="28" className="-mt-[2px] shrink-0">
            <path d="M1 2H15L21 8V25H1Z" fill="#fbfbfb" stroke="#666" strokeWidth="2" strokeLinejoin="round" />
            <path d="M15 2V8H21" fill="none" stroke="#555" strokeWidth="2" />
            <circle cx="19" cy="21" r="6" fill={type === "sell" ? "#f04a10" : "#149bf0"} stroke={type === "sell" ? "#a83208" : "#0c66a8"} />
            <circle cx="17" cy="19" r="2" fill="#fff" fillOpacity="0.6" />
        </svg>
    );
}

function HistoryTable() {
    return (
        <table className="w-full table-fixed border-separate border-spacing-0 text-right text-[19px] leading-none text-black">
            <thead className="[&_th]:border-r [&_th]:border-b [&_th]:border-r-[#e5e5e5] [&_th]:border-b-[#c8c8c8] [&_th]:pt-1 [&_th]:font-normal">
                <tr className="h-[39px]">
                    <th className="w-[249px] pl-[6px] text-left">
                        <span className="flex items-center gap-3">
                            Order
                            <svg viewBox="0 0 5 8" width="5" height="8">
                                <path d="M0.500 8L4 0" stroke="#999" />
                            </svg>
                        </span>
                    </th>
                    {columns.map(([label, width], i) => (
                        <th key={i} className={clsx(width, "pr-1")}>
                            {label}
                        </th>
                    ))}
                </tr>
            </thead>
            <tbody className="[&_td]:border-r [&_td]:border-b [&_td]:border-[#c8c8c8] [&_td]:pt-[2px] [&_td]:pr-[5px] [&_td:last-child]:pr-[7px]">
                {orders.map((o) => (
                    <tr key={o.id} className="h-[34px] odd:bg-[#ebebeb]">
                        <td>
                            <span className="flex items-center gap-[6px] pl-1">
                                <OrderIcon type={o.type} />
                                {o.id}
                            </span>
                        </td>
                        <td>2022.03.08 {o.opened}</td>
                        <td>{o.type}</td>
                        <td>{o.size}</td>
                        <td>{o.symbol}</td>
                        <td>{o.price}</td>
                        <td>{o.sl}</td>
                        <td className={clsx(o.hitTp && "bg-[#66f466]")}>{o.tp}</td>
                        <td>2022.03.08 {o.closed}</td>
                        <td>{o.closePrice}</td>
                        <td>0.00</td>
                        <td>{o.profit}</td>
                    </tr>
                ))}
            </tbody>
            <tfoot>
                <tr className="h-[34px] bg-[#c8c8c8] text-[20px] font-bold">
                    <td colSpan={11} className="pl-3 text-left">
                        <span className="flex items-center gap-[13px]">
                            <svg viewBox="0 0 12 12" width="12" height="12">
                                <circle cx="6" cy="6" r="5" fill="#ccc" stroke="#888" strokeWidth="1.5" />
                                <path d="M3 9L9 3" stroke="#888" strokeWidth="1.5" />
                            </svg>
                            <span>Profit/Loss: 4 651.71</span>
                            <span>Credit: 0.00</span>
                            <span>Deposit: 0.00</span>
                            <span>Withdrawal: 0.00</span>
                        </span>
                    </td>
                    <td className="pr-[8px]">4 651.71</td>
                </tr>
            </tfoot>
        </table>
    );
}

function ScrollBar() {
    return (
        <div className="flex w-[28px] shrink-0 flex-col bg-[#f0f0f0]">
            <button type="button" aria-label="Scroll up" className="flex h-7 items-center justify-center pt-2">
                <svg viewBox="0 0 12 8" width="12" height="8" fill="none">
                    <path d="M1 7L6 2L11 7" stroke="#606060" strokeWidth="2" />
                </svg>
            </button>
            <div className="flex-[295]" />
            <div className="flex-[391] bg-[#cdcdcd]" />
            <button type="button" aria-label="Scroll down" className="flex h-[30px] items-center justify-center">
                <svg viewBox="0 0 12 8" width="12" height="8" fill="none">
                    <path d="M1 1L6 6L11 1" stroke="#606060" strokeWidth="2" />
                </svg>
            </button>
        </div>
    );
}

function TerminalPanel() {
    return (
        <section className="flex border-t border-white pt-[7px]">
            <div className="flex w-[15px] shrink-0 flex-col overflow-hidden">
                <button type="button" aria-label="Close" className="flex h-6 items-start pt-[3px]">
                    <svg viewBox="0 0 10 12" width="10" height="12">
                        <path d="M-3 2L5 10M5 2L-3 10" stroke="#000" strokeWidth="2" />
                    </svg>
                </button>
                <div className="mr-[2px] flex flex-1 flex-col items-end justify-end bg-linear-to-b from-[#d7e4f2] to-[#b9cade] pb-1">
                    <span className="rotate-180 pr-1 text-[19px] leading-5 [writing-mode:vertical-rl]">Terminal</span>
                </div>
            </div>
            <div className="min-w-0 flex-1">
                <div className="flex border-t border-l border-[#a0a0a0] bg-white">
                    <div className="min-w-0 flex-1 pb-[25px]">
                        <HistoryTable />
                    </div>
                    <ScrollBar />
                </div>
                <div className="flex border-b border-white pl-px">
                    <TabStrip tabs={terminalTabs} active="Account History" />
                </div>
            </div>
            <div className="w-[9px] shrink-0 border-l border-white" />
        </section>
    );
}

/* ---------- status bar ---------- */

const statusCells = ["w-[180px]", "w-[123px]", "w-[124px]", "w-[117px]", "w-[122px]", "w-[116px]"];

function StatusBar() {
    return (
        <footer className="mt-[6px] flex h-[37px] items-stretch border-t-2 border-[#a0a0a0] pt-1 text-[19px] leading-[36px] [&>div]:border-[#a0a0a0]">
            <div className="flex-1 whitespace-nowrap">or Help, press F1</div>
            <div className="w-[207px] border-l pl-[6px]">Default</div>
            {statusCells.map((width) => (
                <div key={width} className={clsx(width, "border-l")} />
            ))}
            <div className="flex w-[225px] gap-[6px] border-l pl-1">
                <svg viewBox="0 0 41 24" width="41" height="24" className="mt-[3px]">
                    {[0, 1, 2, 3, 4, 5, 6, 7].map((i) => (
                        <g key={i}>
                            <rect x={i * 5.200} y="0" width="4" height={16 - i * 2} fill="#5f7f0d" />
                            <rect x={i * 5.200} y={18 - i * 2} width="4" height={6 + i * 2} fill="#0e3f66" />
                        </g>
                    ))}
                </svg>
                189/3 kb
            </div>
        </footer>
    );
}

export default function App() {
    return (
        <div className="min-h-screen w-full overflow-hidden bg-[#f0f0f0] font-['Open_Sans',sans-serif] text-black">
            <Toolbar />
            <div className="h-1 border-t-2 border-[#808080] bg-black" />
            <div className="flex">
                <div className="min-w-0 flex-1">
                    <PricePlot />
                </div>
                <PriceAxis />
            </div>
            <div className="flex border-t-2 border-white">
                <TabStrip tabs={chartTabs} active="US500,M15" />
                <div className="flex w-[80px] justify-end gap-[27px] border-t border-black pr-4">
                    <button type="button" aria-label="Previous tab">
                        <svg viewBox="0 0 7 12" width="7" height="12">
                            <path d="M7 0V12L0 6Z" fill="#a0a0a0" />
                        </svg>
                    </button>
                    <button type="button" aria-label="Next tab">
                        <svg viewBox="0 0 7 12" width="7" height="12">
                            <path d="M0 0V12L7 6Z" fill="#a0a0a0" />
                        </svg>
                    </button>
                </div>
            </div>
            <TerminalPanel />
            <StatusBar />
        </div>
    );
}
